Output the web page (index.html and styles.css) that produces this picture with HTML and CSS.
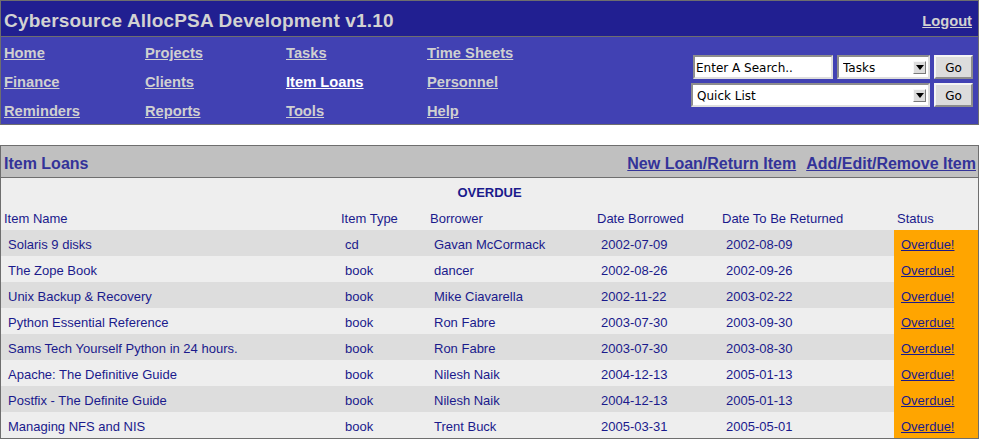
FILE: index.html
```html
<!DOCTYPE html>
<html lang="en">
<head>
<meta charset="utf-8">
<title>Item Loans - AllocPSA</title>
<link rel="stylesheet" href="styles.css">
</head>
<body>
<div class="page">
  <header class="masthead">
    <div class="titlebar">
      <span class="site-title">Cybersource AllocPSA Development v1.10</span>
      <a class="logout" href="#">Logout</a>
    </div>
    <div class="navbar">
      <nav class="menu">
        <a href="#">Home</a>
        <a href="#">Projects</a>
        <a href="#">Tasks</a>
        <a href="#">Time Sheets</a>
        <a href="#">Finance</a>
        <a href="#">Clients</a>
        <a href="#" class="current">Item Loans</a>
        <a href="#">Personnel</a>
        <a href="#">Reminders</a>
        <a href="#">Reports</a>
        <a href="#">Tools</a>
        <a href="#">Help</a>
      </nav>
      <form class="search">
        <div class="srow">
          <input class="field" type="text" value="Enter A Search..">
          <span class="selectbox sel-cat">
            <select><option>Tasks</option><option>Projects</option><option>Clients</option></select>
            <span class="arrowbox"><svg width="8" height="5" viewBox="0 0 8 5"><polygon points="0,0 8,0 4,5" fill="#000"/></svg></span>
          </span>
          <button type="button" class="gobtn">Go</button>
        </div>
        <div class="srow">
          <span class="selectbox sel-quick">
            <select><option>Quick List</option></select>
            <span class="arrowbox"><svg width="8" height="5" viewBox="0 0 8 5"><polygon points="0,0 8,0 4,5" fill="#000"/></svg></span>
          </span>
          <button type="button" class="gobtn">Go</button>
        </div>
      </form>
    </div>
  </header>

  <section class="panel">
    <div class="panel-head">
      <span class="panel-title">Item Loans</span>
      <span class="panel-links">
        <a href="#">New Loan/Return Item</a>
        <a href="#">Add/Edit/Remove Item</a>
      </span>
    </div>
    <table class="loans">
      <colgroup>
        <col class="c-name"><col class="c-type"><col class="c-borrower"><col class="c-borrowed"><col class="c-due"><col class="c-status">
      </colgroup>
      <thead>
        <tr><th colspan="6" class="group">OVERDUE</th></tr>
        <tr class="heads">
          <th>Item Name</th><th>Item Type</th><th>Borrower</th><th>Date Borrowed</th><th>Date To Be Returned</th><th>Status</th>
        </tr>
      </thead>
      <tbody>
        <tr class="odd"><td>Solaris 9 disks</td><td>cd</td><td>Gavan McCormack</td><td>2002-07-09</td><td>2002-08-09</td><td class="status"><a href="#">Overdue!</a></td></tr>
        <tr class="even"><td>The Zope Book</td><td>book</td><td>dancer</td><td>2002-08-26</td><td>2002-09-26</td><td class="status"><a href="#">Overdue!</a></td></tr>
        <tr class="odd"><td>Unix Backup &amp; Recovery</td><td>book</td><td>Mike Ciavarella</td><td>2002-11-22</td><td>2003-02-22</td><td class="status"><a href="#">Overdue!</a></td></tr>
        <tr class="even"><td>Python Essential Reference</td><td>book</td><td>Ron Fabre</td><td>2003-07-30</td><td>2003-09-30</td><td class="status"><a href="#">Overdue!</a></td></tr>
        <tr class="odd"><td>Sams Tech Yourself Python in 24 hours.</td><td>book</td><td>Ron Fabre</td><td>2003-07-30</td><td>2003-08-30</td><td class="status"><a href="#">Overdue!</a></td></tr>
        <tr class="even"><td>Apache: The Definitive Guide</td><td>book</td><td>Nilesh Naik</td><td>2004-12-13</td><td>2005-01-13</td><td class="status"><a href="#">Overdue!</a></td></tr>
        <tr class="odd"><td>Postfix - The Definite Guide</td><td>book</td><td>Nilesh Naik</td><td>2004-12-13</td><td>2005-01-13</td><td class="status"><a href="#">Overdue!</a></td></tr>
        <tr class="even"><td>Managing NFS and NIS</td><td>book</td><td>Trent Buck</td><td>2005-03-31</td><td>2005-05-01</td><td class="status"><a href="#">Overdue!</a></td></tr>
      </tbody>
    </table>
  </section>
</div>
</body>
</html>
```

FILE: styles.css
```css
* { box-sizing: border-box; }

body {
  margin: 0;
  background: #ffffff;
  font-family: "Liberation Sans", Arial, Helvetica, sans-serif;
  color: #1a1a8c;
}

.page {
  width: 979px;
}

/* ---------- masthead ---------- */
.masthead {
  border: 1px solid #6e6e6e;
}

.titlebar {
  height: 36px;
  padding: 4px 6px 0 3px;
  background: #211f91;
  border-bottom: 1px solid #6e6e6e;
  display: flex;
  align-items: center;
  justify-content: space-between;
}

.site-title {
  font-size: 19px;
  font-weight: bold;
  letter-spacing: 0.18px;
  color: #d2d2d2;
}

.logout {
  font-size: 14.7px;
  font-weight: bold;
  color: #d2d2d2;
}

.navbar {
  height: 87px;
  padding: 0 5px 0 3px;
  background: #4141b3;
  display: flex;
  justify-content: space-between;
  align-items: center;
}

.menu {
  align-self: stretch;
  padding-top: 2px;
  display: grid;
  grid-template-columns: repeat(4, 141px);
  grid-auto-rows: 29px;
  line-height: 29px;
}

.menu a {
  justify-self: start;
  font-size: 14.7px;
  font-weight: bold;
  color: #d0d0d0;
}

.menu a.current {
  color: #ffffff;
}

/* ---------- search widgets ---------- */
.search {
  margin: 0;
  display: flex;
  flex-direction: column;
  align-items: flex-end;
  gap: 4px;
  padding-top: 1px;
}

.srow {
  display: flex;
  gap: 4px;
}

.field,
.selectbox select,
.gobtn {
  height: 24px;
  margin: 0;
  font-family: "DejaVu Sans", Verdana, sans-serif;
  font-size: 12px;
  color: #000;
  line-height: 18px;
}

.field {
  width: 140px;
  padding: 2px 1px 0 1px;
  background: #fff;
  border: 2px solid;
  border-color: #8d8d8d #dedede #dedede #8d8d8d;
  outline: none;
}

.selectbox {
  position: relative;
  display: block;
}

.selectbox select {
  -webkit-appearance: none;
  appearance: none;
  width: 100%;
  padding: 2px 4px 0 4px;
  background: #fff;
  border: 2px solid;
  border-color: #8d8d8d #dedede #dedede #8d8d8d;
  border-radius: 0;
  outline: none;
}

.sel-cat { width: 93px; }
.sel-quick { width: 239px; }

.arrowbox {
  position: absolute;
  right: 4px;
  top: 6px;
  width: 13px;
  height: 13px;
  background: #dcdcdc;
  border: 1px solid;
  border-color: #f8f8f8 #7a7a7a #7a7a7a #f8f8f8;
  display: flex;
  align-items: center;
  justify-content: center;
  pointer-events: none;
}

.arrowbox svg { display: block; }

.gobtn {
  width: 39px;
  padding: 2px 0 0 0;
  background: #dcdcdc;
  border: 2px solid;
  border-color: #f4f4f4 #8d8d8d #8d8d8d #f4f4f4;
  border-radius: 0;
  text-align: center;
}

/* ---------- panel ---------- */
.panel {
  margin-top: 20px;
  border: 1px solid #6e6e6e;
  background: #eeeeee;
}

.panel-head {
  height: 32px;
  padding: 4px 2px 0 3px;
  background: #c0c0c0;
  border-bottom: 1px solid #6e6e6e;
  display: flex;
  align-items: center;
  justify-content: space-between;
  font-size: 16px;
  font-weight: bold;
  color: #333399;
}

.panel-links {
  display: flex;
  gap: 10px;
}

.panel-links a {
  color: #333399;
}

/* ---------- table ---------- */
.loans {
  width: 100%;
  border-collapse: collapse;
  table-layout: fixed;
  font-size: 13px;
}

.c-name { width: 337px; }
.c-type { width: 89px; }
.c-borrower { width: 167px; }
.c-borrowed { width: 125px; }
.c-due { width: 175px; }
.c-status { width: 84px; }

.loans th,
.loans td {
  padding: 3px 0 0 7px;
  line-height: 23px;
  text-align: left;
  white-space: nowrap;
  font-weight: normal;
  color: #1a1a8c;
}

.loans .heads th {
  padding-left: 3px;
}

.loans th.group {
  padding-left: 0;
  text-align: center;
  font-weight: bold;
}

.loans tr.odd { background: #dddddd; }
.loans tr.even { background: #eeeeee; }

.loans td.status {
  background: #ffa500;
}

.loans td.status a {
  color: #1a1a8c;
}
```
